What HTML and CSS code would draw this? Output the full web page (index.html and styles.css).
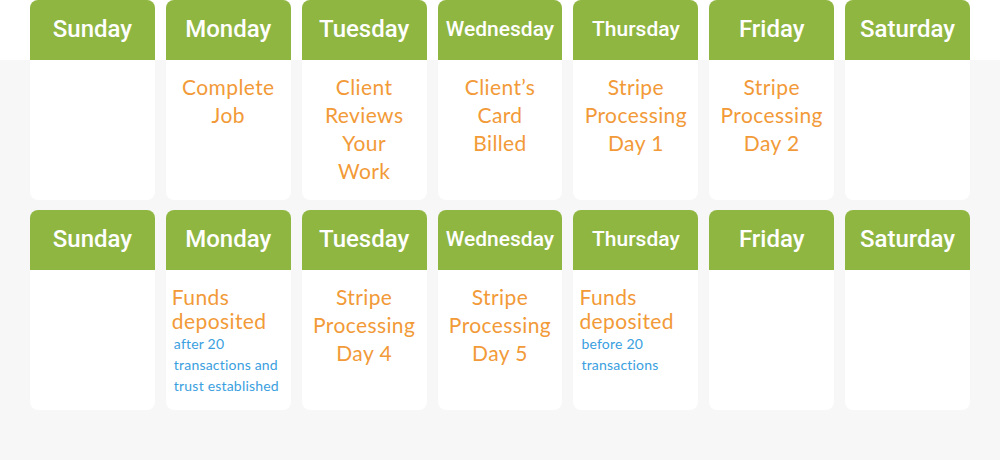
FILE: index.html
```html
<!DOCTYPE html>
<html>
<head>
<meta charset="utf-8">
<link rel="stylesheet" href="styles.css">
</head>
<body>
<div class="calendar">
  <div class="day"><div class="head">Sunday</div><div class="body"></div></div>
  <div class="day"><div class="head">Monday</div><div class="body"><p class="event">Complete<br>Job</p></div></div>
  <div class="day"><div class="head">Tuesday</div><div class="body"><p class="event">Client<br>Reviews<br>Your<br>Work</p></div></div>
  <div class="day"><div class="head small">Wednesday</div><div class="body"><p class="event">Client’s<br>Card<br>Billed</p></div></div>
  <div class="day"><div class="head small">Thursday</div><div class="body"><p class="event">Stripe<br>Processing<br>Day 1</p></div></div>
  <div class="day"><div class="head">Friday</div><div class="body"><p class="event">Stripe<br>Processing<br>Day 2</p></div></div>
  <div class="day"><div class="head">Saturday</div><div class="body"></div></div>

  <div class="day"><div class="head">Sunday</div><div class="body"></div></div>
  <div class="day"><div class="head">Monday</div><div class="body left"><p class="event tight">Funds<br>deposited</p><p class="note">after 20<br>transactions and<br>trust established</p></div></div>
  <div class="day"><div class="head">Tuesday</div><div class="body"><p class="event">Stripe<br>Processing<br>Day 4</p></div></div>
  <div class="day"><div class="head small">Wednesday</div><div class="body"><p class="event">Stripe<br>Processing<br>Day 5</p></div></div>
  <div class="day"><div class="head small">Thursday</div><div class="body left"><p class="event tight">Funds<br>deposited</p><p class="note">before 20<br>transactions</p></div></div>
  <div class="day"><div class="head">Friday</div><div class="body"></div></div>
  <div class="day"><div class="head">Saturday</div><div class="body"></div></div>
</div>
</body>
</html>
```
FILE: styles.css
```css
html, body {
  margin: 0;
  padding: 0;
}
body {
  width: 1000px;
  height: 460px;
  background: linear-gradient(#ffffff 0, #ffffff 60px, #f7f7f7 60px);
  font-family: "Open Sans", "Liberation Sans", sans-serif;
  overflow: hidden;
}
.calendar {
  display: grid;
  width: 940px;
  grid-template-columns: repeat(7, 1fr);
  column-gap: 11px;
  row-gap: 10px;
  padding-left: 30px;
}
.day {
  height: 200px;
  background: #ffffff;
  border-radius: 8px;
  overflow: hidden;
  display: flex;
  flex-direction: column;
}
.head {
  height: 60px;
  box-sizing: border-box;
  padding-bottom: 3px;
  background: #8fb641;
  color: #ffffff;
  font-family: Roboto, "Liberation Sans", sans-serif;
  font-weight: 500;
  font-size: 24px;
  display: flex;
  align-items: center;
  justify-content: center;
}
.head.small {
  font-size: 21px;
}
.body {
  flex: 1;
  padding: 13px 6px 0;
  text-align: center;
}
.body.left {
  text-align: left;
  padding-top: 15px;
}
.event {
  margin: 0;
  color: #f29a38;
  font-family: Lato, "Open Sans", sans-serif;
  font-size: 21px;
  line-height: 28px;
  letter-spacing: 0.4px;
}
.event.tight {
  line-height: 24px;
}
.note {
  margin: 0;
  padding-left: 2px;
  color: #3aa0e0;
  font-family: Lato, "Open Sans", sans-serif;
  font-size: 14px;
  line-height: 21px;
  letter-spacing: 0.2px;
}
```
